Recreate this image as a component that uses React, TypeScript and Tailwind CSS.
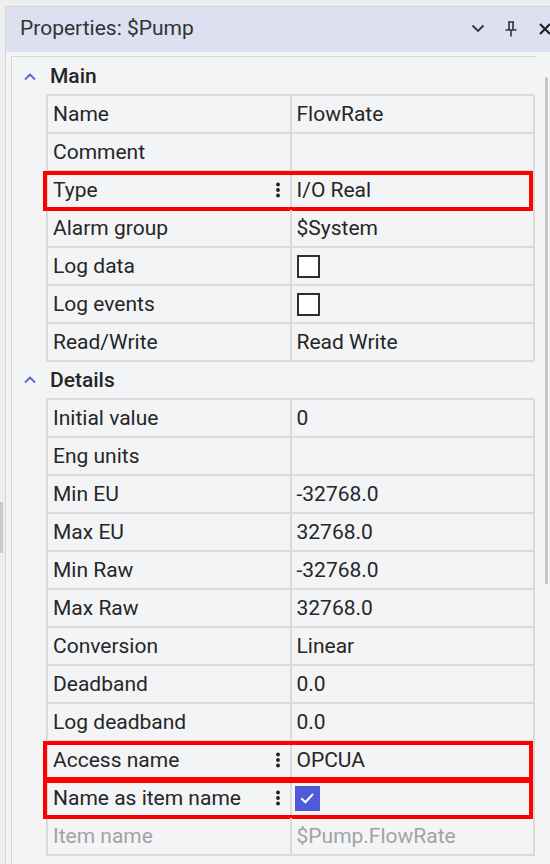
import React from "react";

type Row = {
  label: string;
  value?: string;
  check?: "on" | "off";
  dots?: boolean;
  red?: boolean;
  muted?: boolean;
};

const mainRows: Row[] = [
  { label: "Name", value: "FlowRate" },
  { label: "Comment", value: "" },
  { label: "Type", value: "I/O Real", dots: true, red: true },
  { label: "Alarm group", value: "$System" },
  { label: "Log data", check: "off" },
  { label: "Log events", check: "off" },
  { label: "Read/Write", value: "Read Write" },
];

const detailRows: Row[] = [
  { label: "Initial value", value: "0" },
  { label: "Eng units", value: "" },
  { label: "Min EU", value: "-32768.0" },
  { label: "Max EU", value: "32768.0" },
  { label: "Min Raw", value: "-32768.0" },
  { label: "Max Raw", value: "32768.0" },
  { label: "Conversion", value: "Linear" },
  { label: "Deadband", value: "0.0" },
  { label: "Log deadband", value: "0.0" },
  { label: "Access name", value: "OPCUA", dots: true, red: true },
  { label: "Name as item name", check: "on", dots: true, red: true },
  { label: "Item name", value: "$Pump.FlowRate", muted: true },
];

function Dots() {
  return (
    <svg width="6" height="16" viewBox="0 0 6 16">
      <circle cx="3" cy="2.5" r="1.9" fill="#1f1f1f" />
      <circle cx="3" cy="8" r="1.9" fill="#1f1f1f" />
      <circle cx="3" cy="13.5" r="1.9" fill="#1f1f1f" />
    </svg>
  );
}

function Check({ on }: { on: boolean }) {
  if (on) {
    return (
      <div className="ml-[-2px] w-[25px] h-[25px] bg-[#5059d8] flex items-center justify-center">
        <svg width="18" height="18" viewBox="0 0 18 18">
          <path d="M3.2 9.3 L7.4 13.3 L15 5" fill="none" stroke="#ffffff" strokeWidth="2" />
        </svg>
      </div>
    );
  }
  return <div className="w-[23px] h-[23px] bg-white border-[2.5px] border-[#2e2e2e]" />;
}

function PropRow({ r }: { r: Row }) {
  const txt = r.muted ? "text-[#a3a3a3]" : "text-[#262626]";
  return (
    <div className="relative grid grid-cols-2 h-[38px]">
      <div className={`flex items-center justify-between pl-[5px] pr-[9px] border-r-2 border-b-2 border-[#dadada] ${txt}`}>
        <span>{r.label}</span>
        {r.dots && <Dots />}
      </div>
      <div className={`flex items-center pl-[5px] border-r-2 border-b-2 border-[#dadada] ${txt}`}>
        {r.check ? <Check on={r.check === "on"} /> : <span>{r.value}</span>}
      </div>
      {r.red && (
        <div className="absolute left-[-5px] right-[2px] top-[-1px] bottom-[-1px] border-[4px] border-[#ff0000] pointer-events-none" />
      )}
    </div>
  );
}

function ChevronUp() {
  return (
    <svg width="12" height="8" viewBox="0 0 12 8">
      <path d="M1 6.5 L6 1.5 L11 6.5" fill="none" stroke="#5a5fd8" strokeWidth="1.8" />
    </svg>
  );
}

function Section({ title, rows, h }: { title: string; rows: Row[]; h: string }) {
  return (
    <div className="flex flex-col">
      <div className={`flex items-center ${h}`}>
        <div className="ml-[12px] w-[12px] flex items-center">
          <ChevronUp />
        </div>
        <span className="ml-[14px] font-medium text-[#262626]">{title}</span>
      </div>
      <div className="ml-[34px] w-[489px] border-l-2 border-t-2 border-[#dadada]">
        {rows.map((r) => (
          <PropRow key={r.label} r={r} />
        ))}
      </div>
    </div>
  );
}

export default function App() {
  return (
    <div className="relative w-[550px] h-[864px] overflow-hidden bg-[#eeeeee] flex font-['Roboto',sans-serif] text-[21px] leading-none">
      {/* left splitter gutter */}
      <div className="relative w-[5px] shrink-0 bg-[#eeeeee]">
        <div className="absolute left-0 top-[502px] w-[3px] h-[51px] bg-[#c9c9c9]" />
      </div>
      {/* panel */}
      <div className="flex-1 mt-[6px] border-l border-t border-[#d3d3d3] flex flex-col">
        <div className="h-[45px] shrink-0 bg-[#dde0f1] flex items-center pl-[14px] pb-[2px]">
          <span className="text-[#333333]">Properties: $Pump</span>
          <div className="ml-auto flex items-center">
            <svg width="14" height="9" viewBox="0 0 14 9" className="mr-[19px]">
              <path d="M1.5 1.5 L7 7 L12.5 1.5" fill="none" stroke="#333" strokeWidth="1.8" />
            </svg>
            <svg width="14" height="16" viewBox="0 0 14 16" className="mr-[21px]">
              <path d="M4 1 H10 M5 1 V9 M9 1 V9 M1.5 9 H12.5 M7 9 V15.5" fill="none" stroke="#333" strokeWidth="1.6" />
            </svg>
            <svg width="14" height="12" viewBox="0 0 14 12" className="mr-[-3px]">
              <path d="M1 1 L11 11 M11 1 L1 11" fill="none" stroke="#222" strokeWidth="2.2" />
            </svg>
          </div>
        </div>
        <div className="flex-1 bg-[#f3f4f6] flex pl-[5px] pt-[4px]">
          <div className="relative flex-1 border-l border-[#d6d6d6] flex flex-col">
            <div className="w-[524px] h-[1px] bg-[#d6d6d6]" />
            <Section title="Main" rows={mainRows} h="h-[37px] pt-[2px]" />
            <Section title="Details" rows={detailRows} h="h-[36px]" />
            <div className="absolute left-[533px] top-[21px] w-[3px] h-[507px] bg-[#c6c6c6] rounded-full" />
          </div>
        </div>
      </div>
    </div>
  );
}
